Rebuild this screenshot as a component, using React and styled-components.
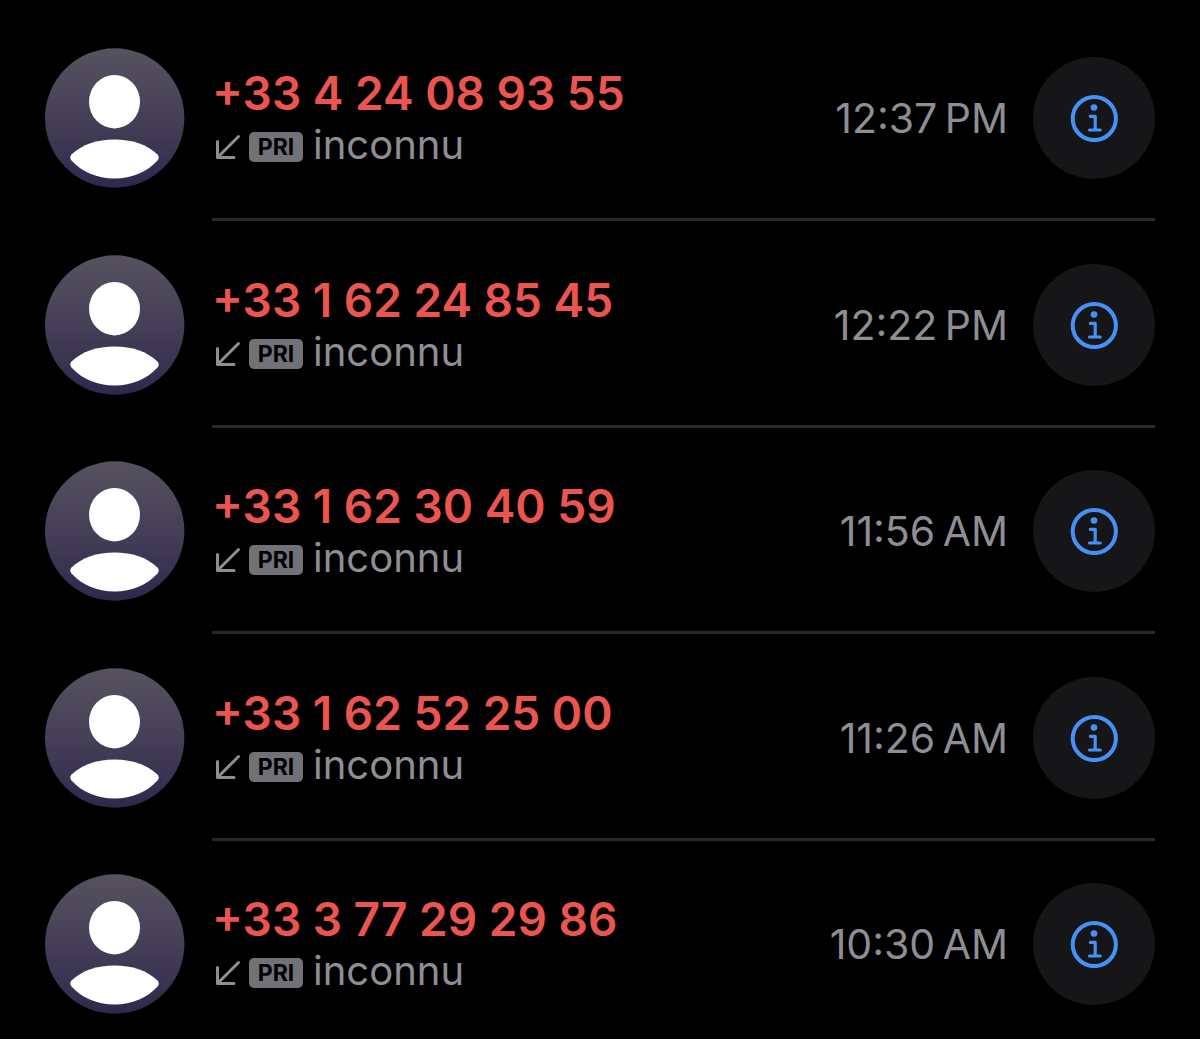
import React from "react";
import styled, { createGlobalStyle } from "styled-components";

const GlobalStyle = createGlobalStyle`
  * {
    box-sizing: border-box;
  }

  body {
    margin: 0;
    background: #000;
    font-family: Inter, "Liberation Sans", sans-serif;
  }
`;

const CallList = styled.ul`
  list-style: none;
  margin: 0;
  padding: 48px 45px 20px;
`;

const CallRow = styled.li`
  display: flex;
  gap: 27px;
  margin-bottom: 34px;

  &:nth-child(even) {
    margin-bottom: 33px;
  }

  &:last-child {
    margin-bottom: 0;
  }
`;

const AvatarIcon = styled.svg`
  flex: none;
  width: 140px;
  height: 140px;
`;

const CallBody = styled.div`
  flex: 1;
  display: flex;
  align-items: center;
  min-width: 0;
  min-height: 173px;
  padding-bottom: 30px;
  border-bottom: 3px solid #29292b;

  ${CallRow}:last-child & {
    min-height: 140px;
    padding-bottom: 0;
    border-bottom: none;
  }
`;

const CallInfo = styled.div`
  flex: 1;
  min-width: 0;
`;

const Number = styled.div`
  color: #eb5550;
  font-size: 46px;
  font-weight: 600;
  line-height: 54px;
  white-space: nowrap;
`;

const CallDetail = styled.div`
  display: flex;
  align-items: center;
  color: #8e8e93;
  font-size: 40px;
  line-height: 50px;
`;

const ArrowIcon = styled.svg`
  width: 32px;
  height: 28px;
  margin: 4px 5px 0 0;
`;

const LineBadge = styled.span`
  width: 54px;
  height: 30px;
  margin: 4px 10px 0 0;
  border-radius: 5px;
  background: #727276;
  color: #000;
  font-size: 23px;
  font-weight: 700;
  line-height: 30px;
  text-align: center;
`;

const Time = styled.time`
  color: #8e8e93;
  font-size: 41px;
  line-height: 50px;
  white-space: nowrap;
`;

const InfoButton = styled.button`
  flex: none;
  display: flex;
  align-items: center;
  justify-content: center;
  width: 122px;
  height: 122px;
  margin-left: 25px;
  padding: 0;
  border: none;
  border-radius: 50%;
  background: #161618;
  color: #4492f8;
  cursor: pointer;
`;

// narrow no-break space before AM / PM
const calls = [
  { number: "+33 4 24 08 93 55", time: "12:37\u202fPM" },
  { number: "+33 1 62 24 85 45", time: "12:22\u202fPM" },
  { number: "+33 1 62 30 40 59", time: "11:56\u202fAM" },
  { number: "+33 1 62 52 25 00", time: "11:26\u202fAM" },
  { number: "+33 3 77 29 29 86", time: "10:30\u202fAM" },
];

function Avatar({ id }) {
  return (
    <AvatarIcon viewBox="0 0 140 140" aria-hidden="true">
      <defs>
        <linearGradient id={id} x1="0" y1="0" x2="0" y2="1">
          <stop offset="0" stopColor="#56525f" />
          <stop offset="0.5" stopColor="#453f57" />
          <stop offset="1" stopColor="#30284c" />
        </linearGradient>
      </defs>
      <circle cx="69.7" cy="70" r="69.7" fill={`url(#${id})`} />
      <ellipse cx="69.5" cy="53.7" rx="25.5" ry="26.7" fill="#fff" />
      <path
        d="M26.5 106.5C37 96.5 52 91.5 69.5 91.5S102 96.5 112.5 106.5Q115 109.5 112.5 112.5C102 124 87 130.5 69.5 130.5S37 124 26.5 112.5Q24 109.5 26.5 106.5Z"
        fill="#fff"
      />
    </AvatarIcon>
  );
}

function Arrow() {
  return (
    <ArrowIcon
      viewBox="0 0 32 28"
      fill="none"
      stroke="currentColor"
      strokeWidth="3"
      strokeLinecap="round"
      strokeLinejoin="round"
      aria-hidden="true"
    >
      <path d="M26.5 3.500L5.5 24.500M5.500 8.500V24.500H22" />
    </ArrowIcon>
  );
}

function InfoIcon() {
  return (
    <svg width="48" height="48" viewBox="0 0 48 48" fill="none" aria-hidden="true">
      <circle cx="24.3" cy="24.5" r="21.6" stroke="currentColor" strokeWidth="4" />
      <circle cx="24" cy="13.5" r="3.3" fill="currentColor" />
      <path
        d="M20.3 22.300H25.200V36M19.500 36H30.200"
        stroke="currentColor"
        strokeWidth="3.2"
        strokeLinecap="round"
        strokeLinejoin="round"
      />
    </svg>
  );
}

function Call({ id, number, time }) {
  return (
    <CallRow>
      <Avatar id={id} />
      <CallBody>
        <CallInfo>
          <Number>{number}</Number>
          <CallDetail>
            <Arrow />
            <LineBadge>PRI</LineBadge>
            <span>inconnu</span>
          </CallDetail>
        </CallInfo>
        <Time>{time}</Time>
        <InfoButton type="button" aria-label={`Info ${number}`}>
          <InfoIcon />
        </InfoButton>
      </CallBody>
    </CallRow>
  );
}

function App() {
  return (
    <>
      <GlobalStyle />
      <CallList>
        {calls.map((call, i) => (
          <Call key={i} id={`avatar${i}`} number={call.number} time={call.time} />
        ))}
      </CallList>
    </>
  );
}

export default App;
